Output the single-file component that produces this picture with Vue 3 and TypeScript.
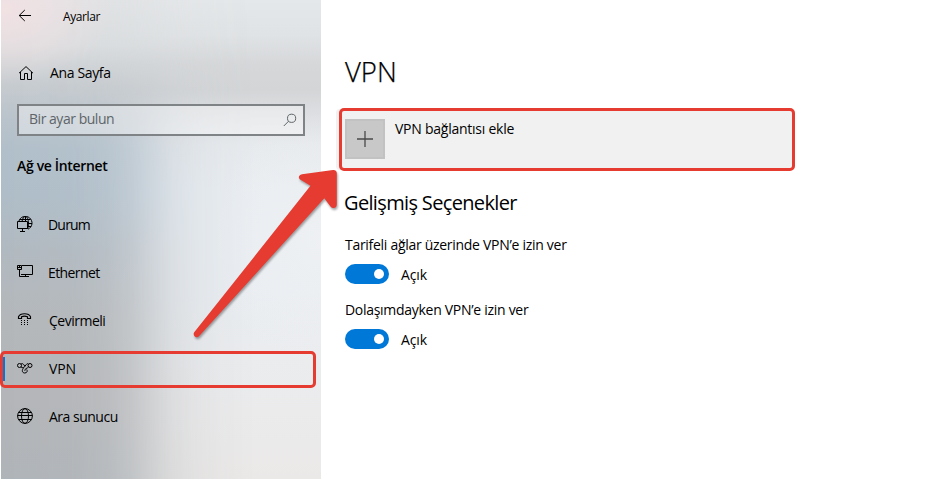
<script setup lang="ts">
import { ref } from 'vue'

interface NavItem {
  id: string
  label: string
}

interface Option {
  id: string
  label: string
  on: boolean
}

const items: NavItem[] = [
  { id: 'status', label: 'Durum' },
  { id: 'ethernet', label: 'Ethernet' },
  { id: 'dialup', label: 'Çevirmeli' },
  { id: 'vpn', label: 'VPN' },
  { id: 'proxy', label: 'Ara sunucu' },
]

const active = ref('vpn')

const options = ref<Option[]>([
  { id: 'metered', label: 'Tarifeli ağlar üzerinde VPN’e izin ver', on: true },
  { id: 'roaming', label: 'Dolaşımdayken VPN’e izin ver', on: true },
])
</script>

<template>
  <div class="window">
    <aside class="sidebar">
      <header class="titlebar">
        <svg class="back" width="14" height="14" viewBox="0 0 14 14">
          <path d="M13 6.5H1.2M6.8 1L1.2 6.5L6.8 12" />
        </svg>
        <span class="app-name">Ayarlar</span>
      </header>

      <div class="home">
        <svg width="16" height="16" viewBox="0 0 16 16">
          <path d="M1 8.2L8 1.6L15 8.2M2.5 7V14.5H6.5V8.5H9.5V14.5H13.5V7" />
        </svg>
        <span class="home-label">Ana Sayfa</span>
      </div>

      <div class="search">
        <span class="placeholder">Bir ayar bulun</span>
        <svg width="14" height="14" viewBox="0 0 14 14">
          <circle cx="8.6" cy="5.3" r="4.1" />
          <path d="M5.6 8.2L.8 13" />
        </svg>
      </div>

      <h2 class="category">Ağ ve İnternet</h2>

      <nav class="nav">
        <div
          v-for="item in items"
          :key="item.id"
          class="nav-item"
          :class="[item.id, { active: item.id === active }]"
          @click="active = item.id"
        >
          <svg v-if="item.id === 'status'" width="16" height="16" viewBox="0 0 16 16">
            <path d="M1.800 5.500A6.700 6.700 0 1 1 11 13.200M5 5.500C5.500 2.500 6.800 .5 8.300 .5C10.200 .5 11.500 3.500 11.500 7C11.500 9.500 11.200 11.500 10.500 13M2.800 3.500H13.600M10.500 7.500H15M8.500 .5V5.500M11 10.500H14" />
            <path d="M.5 5.500H10.500V12.500H.5ZM5.500 12.500V15M3 15.500H8" />
          </svg>
          <svg v-else-if="item.id === 'ethernet'" width="16" height="16" viewBox="0 0 16 16">
            <path d="M5 1.500H15.500V10.500H4M8.500 10.500V12.500M4 12.500H12" />
            <path d="M.5 1.500H4.500V5.500H.5ZM.5 3.500H4.500M2.500 1.500V3.500M2.500 5.500V12.500H5" />
          </svg>
          <svg v-else-if="item.id === 'dialup'" width="16" height="16" viewBox="0 0 16 16">
            <path class="handset" d="M1.500 6.500V4.800C3 .7 12 .7 13.500 4.800V6.500H10.500V4.700C8.500 4 6.500 4 4.500 4.700V6.500Z" />
            <path class="dots" d="M3 8.500H12M3 10.500H12M3 12.500H12" />
          </svg>
          <svg v-else-if="item.id === 'vpn'" width="16" height="16" viewBox="0 0 16 16">
            <circle cx="2.500" cy="5.500" r="2" />
            <circle cx="13" cy="5.500" r="2" />
            <path d="M4 4.100C5 3.200 6 3.600 6.700 4.600L8 6.300M4 6.900C5.300 8.200 6.500 7.800 7.600 6.600L9.300 4.500C10 3.500 10.800 3.400 11.500 4.100" />
            <path d="M6.900 7.700C4.300 10.200 5.200 13 7.700 13C10.200 13 10.700 11 9.700 9.500M7.800 10.800C7.800 8.300 10 8.700 11.600 6.900" />
          </svg>
          <svg v-else width="16" height="16" viewBox="0 0 16 16">
            <circle cx="8" cy="8" r="7.400" />
            <ellipse cx="8" cy="8" rx="3.500" ry="7.400" />
            <path d="M.6 7.500H15.400M1.700 4.500H14.300M1.700 11.500H14.300" />
          </svg>
          <span class="nav-label">{{ item.label }}</span>
        </div>
      </nav>
    </aside>

    <main class="content">
      <h1 class="title">VPN</h1>

      <button class="add" type="button">
        <span class="plus">
          <svg width="16" height="16" viewBox="0 0 16 16">
            <path d="M8 0V16M0 8H16" />
          </svg>
        </span>
        <span class="add-label">VPN bağlantısı ekle</span>
      </button>

      <h2 class="subtitle">Gelişmiş Seçenekler</h2>

      <section v-for="option in options" :key="option.id" class="option">
        <div class="option-label" :class="option.id">{{ option.label }}</div>
        <div class="option-row" @click="option.on = !option.on">
          <span class="toggle" :class="{ off: !option.on }"><i class="knob"></i></span>
          <span class="state">{{ option.on ? 'Açık' : 'Kapalı' }}</span>
        </div>
      </section>
    </main>

    <svg class="arrow" width="160" height="180" viewBox="0 0 160 180">
      <path d="M9.200 175L134.300 37.300L140.500 45.500C143 48.500 146.800 47 146.800 43.500V12Q146.500 8.800 143 9L112 13.200C108 14.200 108 17.500 111 19L120.500 24.800L4 171.500C2.500 175 6.500 178 9.200 175Z" />
    </svg>
  </div>
</template>

<style>
body {
  background: #fff;
  overflow: hidden;
}
</style>

<style scoped>
.window {
  position: relative;
  display: flex;
  width: 927px;
  height: 479px;
  overflow: hidden;
  background: #fff;
  color: #000;
  font-family: "Open Sans", "Noto Sans", sans-serif;
  font-size: 14px;
  line-height: 20px;
}

h1,
h2 {
  margin: 0;
}

svg {
  display: block;
  flex: none;
  fill: none;
  stroke: #000;
  stroke-width: 1;
}

.sidebar {
  position: relative;
  isolation: isolate;
  box-sizing: border-box;
  width: 320px;
  height: 479px;
  margin-left: 1px;
  flex: none;
  background: linear-gradient(#e5e8ea 0, #e0e3e5 35px, #d5d7d9 65px, #d3d5d7 90px, #dddfe2 115px, #e7eaed 145px, #e9edf1 190px, #e9edf1 290px, #ebebec 410px, #ebe9e8 479px);
}

.sidebar::before,
.sidebar::after {
  content: "";
  position: absolute;
  inset: 0;
  z-index: -1;
}

.sidebar::before {
  background: linear-gradient(#dfe1e3 0, #d9dcde 45px, #c6cbcf 85px, #b9c3cb 120px, #b1bfca 150px, #afbdc8 195px, #b1b9c0 250px, #b3b7ba 320px, #b3b5b8 400px, #afb4b8 479px);
  mask-image: linear-gradient(90deg, #000 0, rgba(0, 0, 0, .97) 70px, rgba(0, 0, 0, .87) 105px, rgba(0, 0, 0, .7) 130px, rgba(0, 0, 0, .46) 152px, rgba(0, 0, 0, .26) 172px, rgba(0, 0, 0, .13) 195px, rgba(0, 0, 0, .05) 222px, transparent 255px);
}

.sidebar::after {
  background:
    radial-gradient(ellipse 110px 75px at 0 10px, rgba(250, 226, 228, .7), transparent),
    radial-gradient(ellipse 110px 130px at 320px 240px, rgba(245, 245, 246, .4), transparent);
}

.titlebar {
  display: flex;
  align-items: center;
  height: 33px;
  padding-left: 17px;
}

.back {
  margin-bottom: 1px;
}

.app-name {
  margin-left: 31px;
  font-size: 12px;
  letter-spacing: -.4px;
}

.home {
  display: flex;
  align-items: center;
  height: 48px;
  margin-top: 16px;
  padding-left: 17px;
}

.home-label {
  margin-left: 16px;
  letter-spacing: -.35px;
}

.search {
  display: flex;
  align-items: center;
  justify-content: space-between;
  box-sizing: border-box;
  width: 288px;
  height: 32px;
  margin: 7px 0 0 16px;
  padding: 0 6px 2px 10px;
  border: 2px solid #808385;
  background: rgba(255, 255, 255, .36);
  color: #5e6468;
}

.placeholder {
  letter-spacing: -.47px;
}

.search svg {
  margin-top: 1px;
  stroke: #5e6468;
}

.category {
  margin: 20px 0 0 16px;
  font-size: 14px;
  font-weight: 600;
  letter-spacing: -.34px;
}

.nav {
  margin-top: 25px;
}

.nav-item {
  position: relative;
  display: flex;
  align-items: center;
  height: 48px;
  padding-left: 16px;
}

.nav-item svg {
  margin-bottom: 2px;
}

.nav-label {
  margin-left: 16px;
  letter-spacing: -.5px;
}

.status .nav-label {
  margin-left: 15px;
  letter-spacing: -.8px;
}

.ethernet .nav-label {
  margin-left: 15px;
  letter-spacing: -.6px;
}

.vpn .nav-label {
  letter-spacing: -.15px;
}

.handset {
  stroke-width: 1.150;
}

.dots {
  stroke-width: 1;
  stroke-dasharray: 1 2;
  stroke-dashoffset: -1;
}

.active::before {
  content: "";
  position: absolute;
  left: 2px;
  top: 12px;
  width: 2px;
  height: 24px;
  background: #0078d7;
}

.active::after {
  content: "";
  position: absolute;
  left: -1px;
  top: 6px;
  box-sizing: border-box;
  width: 316px;
  height: 37px;
  border: 3px solid #e53b30;
  border-radius: 5px;
}

.content {
  flex: 1;
  padding: 52px 0 0 18px;
}

.title {
  padding-left: 6px;
  font-size: 27.500px;
  font-weight: 300;
  line-height: 40px;
  -webkit-text-stroke: .25px #000;
}

.add {
  display: flex;
  align-items: flex-start;
  box-sizing: border-box;
  width: 456px;
  height: 63px;
  margin-top: 16px;
  padding: 8px 3px;
  border: 3px solid #e53b30;
  border-radius: 5px;
  background: #f1f1f1;
  box-shadow: -4px 0 0 -1px #f1f1f1;
  color: #000;
  font: inherit;
}

.plus {
  display: grid;
  place-items: center;
  box-sizing: border-box;
  width: 40px;
  height: 40px;
  border: 2px solid #c2c2c2;
  background: #c8c8c8;
}

.plus svg {
  stroke: #4a4a4a;
  stroke-width: 1.300;
}

.add-label {
  margin-left: 10px;
  letter-spacing: -.25px;
}

.subtitle {
  margin: 18px 0;
  padding-left: 5px;
  font-size: 20px;
  font-weight: 400;
  letter-spacing: -.65px;
  line-height: 28px;
}

.option {
  height: 65px;
  padding-left: 6px;
}

.option-row {
  display: flex;
  align-items: center;
  height: 20px;
  margin-top: 11px;
}

.option-label {
  height: 18px;
  letter-spacing: -.29px;
}

.toggle {
  display: flex;
  align-items: center;
  justify-content: flex-end;
  box-sizing: border-box;
  width: 44px;
  height: 20px;
  padding: 0 5px;
  border-radius: 10px;
  background: #0078d7;
}

.toggle.off {
  justify-content: flex-start;
  background: #777;
}

.knob {
  width: 10px;
  height: 10px;
  border-radius: 50%;
  background: #fff;
}

.state {
  margin-left: 12px;
  padding-top: 2px;
  letter-spacing: -.15px;
}

.arrow {
  position: absolute;
  left: 190px;
  top: 161px;
  fill: #e53b30;
  stroke: none;
  filter: drop-shadow(1px 2px 1px rgba(0, 0, 0, .35));
}
</style>
